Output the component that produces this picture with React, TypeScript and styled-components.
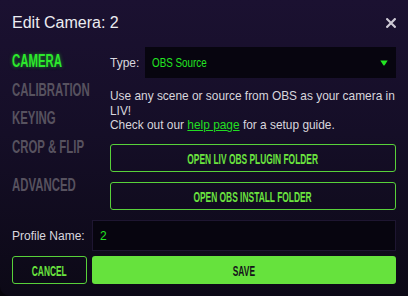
import React from "react";
import styled, { createGlobalStyle } from "styled-components";

const Global = createGlobalStyle`
  html, body { margin: 0; padding: 0; background: #07050c; }
  body { font-family: "Liberation Sans", Arial, sans-serif; }
  * { box-sizing: border-box; }
`;

const Dialog = styled.div`
  width: 408px;
  height: 296px;
  padding: 12px 12px 0;
  display: flex;
  flex-direction: column;
  background: linear-gradient(180deg, #1b1131 0%, #150e27 45%, #0c0916 100%);
  border-bottom-left-radius: 10px;
  color: #d9d7df;
`;

const Header = styled.div`
  display: flex;
  align-items: center;
  justify-content: space-between;
  height: 22px;
`;

const Title = styled.h1`
  margin: 0;
  font-size: 16px;
  font-weight: 400;
  line-height: 22px;
  color: #ececf1;
`;

const CloseButton = styled.button`
  width: 10px;
  height: 10px;
  padding: 0;
  border: 0;
  background: none;
  display: flex;
  align-items: center;
  justify-content: center;
  cursor: pointer;
`;

const Body = styled.div`
  margin-top: 13px;
  display: grid;
  grid-template-columns: 88px 1fr;
  column-gap: 10px;
`;

const Sidebar = styled.nav`
  display: flex;
  flex-direction: column;
`;

const headline = `"Liberation Sans", Arial, sans-serif`;

const NavItem = styled.div<{ $active?: boolean; $spaced?: boolean }>`
  font-family: ${headline};
  font-weight: 700;
  font-size: 18.7px;
  line-height: 28.5px;
  white-space: nowrap;
  margin-top: ${(p) => (p.$spaced ? "10px" : "0")};
  color: ${(p) => (p.$active ? "#2ce92c" : "#57525f")};
  text-shadow: ${(p) => (p.$active ? "0 0 5px rgba(40, 230, 40, 0.55)" : "none")};
`;

const Squeeze = styled.span<{ $scale?: number; $origin?: string }>`
  display: inline-block;
  transform: scaleX(${(p) => p.$scale ?? 0.61});
  transform-origin: ${(p) => p.$origin ?? "left"} center;
`;

const Content = styled.div`
  display: flex;
  flex-direction: column;
`;

const TypeRow = styled.div`
  display: flex;
  align-items: center;
  height: 31px;
`;

const FieldLabel = styled.span`
  width: 35px;
  font-size: 12px;
  color: #d9d7df;
`;

const SelectBox = styled.div`
  flex: 1;
  height: 31px;
  display: flex;
  align-items: center;
  justify-content: space-between;
  padding: 0 8px 0 7px;
  background: #07050f;
`;

const SelectValue = styled.span`
  font-size: 12px;
  color: #22e622;
  white-space: nowrap;
`;

const Description = styled.p`
  margin: 11px 0 0;
  font-size: 11.9px;
  line-height: 14.7px;
  color: #d8d6dd;
`;

const Link = styled.a`
  color: #22dd22;
  text-decoration: underline;
`;

const OutlineButton = styled.button`
  height: 28px;
  display: flex;
  align-items: center;
  justify-content: center;
  border: 1px solid #58d13a;
  border-radius: 3px;
  background: transparent;
  color: #6be43f;
  font-family: ${headline};
  font-weight: 700;
  font-size: 15px;
  white-space: nowrap;
  padding: 0;
  cursor: pointer;
`;

const ButtonStack = styled.div`
  margin-top: 11px;
  display: flex;
  flex-direction: column;
  gap: 10px;
`;

const Footer = styled.div`
  margin-top: 10px;
  display: grid;
  grid-template-columns: 75px 1fr;
  column-gap: 5px;
  row-gap: 5px;
`;

const ProfileLabel = styled.label`
  align-self: center;
  font-size: 12px;
  color: #d9d7df;
  white-space: nowrap;
`;

const TextInput = styled.input`
  height: 31px;
  width: 100%;
  border: 1px solid #1e1631;
  background: #07050f;
  color: #22e222;
  font-family: "Liberation Sans", Arial, sans-serif;
  font-size: 12px;
  padding: 0 7px;
  outline: none;
`;

const SaveButton = styled.button`
  height: 28px;
  display: flex;
  align-items: center;
  justify-content: center;
  border: 0;
  border-radius: 3px;
  background: #66e23d;
  color: #15131a;
  font-family: ${headline};
  font-weight: 700;
  font-size: 15px;
  padding: 0;
  cursor: pointer;
`;

const navItems = ["CAMERA", "CALIBRATION", "KEYING", "CROP & FLIP"];

export default function App() {
  return (
    <>
      <Global />
      <Dialog>
        <Header>
          <Title>Edit Camera: 2</Title>
          <CloseButton aria-label="Close">
            <svg width="10" height="10" viewBox="0 0 10 10">
              <path d="M1.2 1.2 L8.8 8.8 M8.8 1.2 L1.2 8.8" stroke="#cdc9d4" strokeWidth="2.2" strokeLinecap="square" />
            </svg>
          </CloseButton>
        </Header>
        <Body>
          <Sidebar>
            {navItems.map((n, i) => (
              <NavItem key={n} $active={i === 0}>
                <Squeeze>{n}</Squeeze>
              </NavItem>
            ))}
            <NavItem $spaced>
              <Squeeze>ADVANCED</Squeeze>
            </NavItem>
          </Sidebar>
          <Content>
            <TypeRow>
              <FieldLabel>Type:</FieldLabel>
              <SelectBox>
                <SelectValue>
                  <Squeeze $scale={0.82}>OBS Source</Squeeze>
                </SelectValue>
                <svg width="8" height="6" viewBox="0 0 8 6">
                  <path d="M0.3 0.5 H7.7 L4.6 5.2 Q4 6 3.4 5.2 Z" fill="#22e622" />
                </svg>
              </SelectBox>
            </TypeRow>
            <Description>
              Use any scene or source from OBS as your camera in LIV!
              <br />
              Check out our <Link href="#">help page</Link> for a setup guide.
            </Description>
            <ButtonStack>
              <OutlineButton>
                <Squeeze $origin="center" $scale={0.56}>OPEN LIV OBS PLUGIN FOLDER</Squeeze>
              </OutlineButton>
              <OutlineButton>
                <Squeeze $origin="center" $scale={0.56}>OPEN OBS INSTALL FOLDER</Squeeze>
              </OutlineButton>
            </ButtonStack>
          </Content>
        </Body>
        <Footer>
          <ProfileLabel>Profile Name:</ProfileLabel>
          <TextInput defaultValue="2" />
          <OutlineButton>
            <Squeeze $origin="center" $scale={0.56}>CANCEL</Squeeze>
          </OutlineButton>
          <SaveButton>
            <Squeeze $origin="center" $scale={0.56}>SAVE</Squeeze>
          </SaveButton>
        </Footer>
      </Dialog>
    </>
  );
}
